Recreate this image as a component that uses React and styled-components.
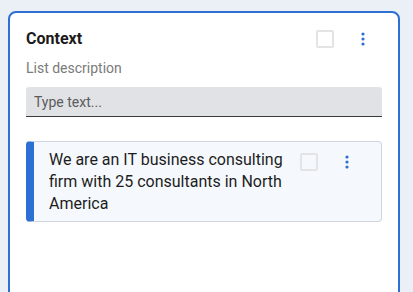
import React from "react";
import styled, { createGlobalStyle } from "styled-components";

const Global = createGlobalStyle`
  html, body { margin: 0; padding: 0; background: #ebeff6; }
  body { font-family: Roboto, "Liberation Sans", sans-serif; }
  * { box-sizing: border-box; }
`;

const Page = styled.div`
  padding: 11px 13px 0 8px;
  height: 292px;
  overflow: hidden;
`;

const Card = styled.section`
  width: 392px;
  height: 320px;
  background: #fff;
  border: 2px solid #2d6fd2;
  border-radius: 8px;
  padding: 16px 16px 16px 16px;
`;

const Header = styled.div`
  display: flex;
  align-items: center;
  height: 20px;
`;

const Title = styled.h2`
  flex: 1;
  margin: 0;
  font-size: 16px;
  line-height: 20px;
  font-weight: 700;
  color: #1b1b1b;
`;

const Actions = styled.div`
  display: flex;
  align-items: center;
  padding-right: ${(p) => p.$pr}px;
`;

const Check = styled.span`
  display: inline-block;
  width: 18px;
  height: 18px;
  border: 2px solid #e3e4e6;
  border-radius: 2px;
  background: transparent;
`;

const Kebab = styled.button`
  width: 28px;
  height: 24px;
  margin-left: ${(p) => p.$ml}px;
  padding: 0;
  border: none;
  background: transparent;
  display: flex;
  align-items: center;
  justify-content: center;
  color: #2d6fd2;
`;

const Description = styled.div`
  margin-top: 9px;
  font-size: 14px;
  line-height: 20px;
  color: #7a7a7a;
`;

const Input = styled.input`
  display: block;
  width: 100%;
  height: 30px;
  margin-top: 9px;
  padding: 0 8px;
  border: none;
  border-bottom: 1px solid #3a3a3a;
  border-radius: 3px 3px 0 0;
  background: #e1e2e6;
  font-family: Roboto, "Liberation Sans", sans-serif;
  font-size: 14px;
  color: #222;
  outline: none;
  &::placeholder { color: #5c5c5c; }
`;

const Item = styled.div`
  display: flex;
  align-items: flex-start;
  margin-top: 24px;
  background: #f5f9fd;
  border: 1px solid #cfd6df;
  border-left: 8px solid #2d6fd2;
  border-radius: 4px;
  padding: 7px 0 6px 15px;
`;

const ItemText = styled.p`
  flex: 1;
  margin: 0;
  font-size: 16px;
  line-height: 22px;
  color: #1d1d1d;
`;

const ItemActions = styled(Actions)`
  margin-left: 8px;
  padding-top: 1px;
`;

function Dots() {
  return (
    <svg width="4" height="14" viewBox="0 0 4 14" fill="currentColor">
      <circle cx="2" cy="2" r="1.6" />
      <circle cx="2" cy="7" r="1.6" />
      <circle cx="2" cy="12" r="1.6" />
    </svg>
  );
}

export default function App() {
  return (
    <>
      <Global />
      <Page>
        <Card>
          <Header>
            <Title>Context</Title>
            <Actions $pr={5}>
              <Check />
              <Kebab $ml={15} aria-label="More">
                <Dots />
              </Kebab>
            </Actions>
          </Header>
          <Description>List description</Description>
          <Input placeholder="Type text..." />
          <Item>
            <ItemText>
              We are an IT business consulting firm with 25 consultants in North America
            </ItemText>
            <ItemActions $pr={20}>
              <Check />
              <Kebab $ml={15} aria-label="More">
                <Dots />
              </Kebab>
            </ItemActions>
          </Item>
        </Card>
      </Page>
    </>
  );
}
